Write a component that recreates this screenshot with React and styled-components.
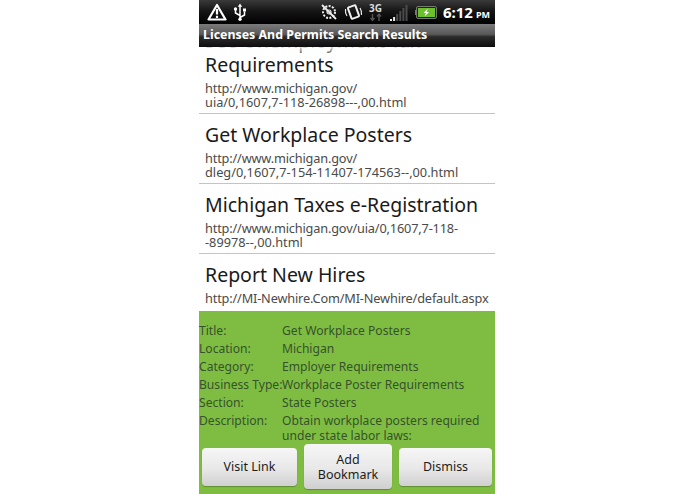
import React from "react";
import styled, { createGlobalStyle } from "styled-components";

const Global = createGlobalStyle`
  html, body {
    margin: 0;
    padding: 0;
    background: #fff;
  }
  * {
    box-sizing: border-box;
  }
`;

const Phone = styled.div`
  width: 296px;
  height: 494px;
  margin-left: 199px;
  display: flex;
  flex-direction: column;
  overflow: hidden;
  background: #fff;
  font-family: "Noto Sans", "Open Sans", sans-serif;
`;
const StatusBar = styled.div`
  height: 24px;
  flex: none;
  display: flex;
  align-items: center;
  padding: 0 5px 0 8px;
  background: linear-gradient(#3a3a3a 0%, #161616 45%, #000 100%);
  color: #fff;
`;
const StatusLeft = styled.div`
  display: flex;
  align-items: center;
  gap: 6px;
  flex: 1;
`;
const StatusRight = styled.div`
  display: flex;
  align-items: center;
  gap: 6px;
`;
const Clock = styled.div`
  font-size: 15px;
  font-weight: 700;
  margin-left: 6px;
  white-space: nowrap;
  span {
    font-size: 9px;
    margin-left: 3px;
  }
`;
const TitleBar = styled.div`
  height: 23px;
  flex: none;
  padding: 2px 0 0 4px;
  background: linear-gradient(#7b7b7b 0%, #585858 45%, #2c2c2c 55%, #0d0d0d 100%);
  color: #fff;
  font-size: 12.4px;
  font-weight: 700;
  line-height: 18px;
  white-space: nowrap;
`;
const List = styled.div`
  position: relative;
  flex: 1;
  min-height: 0;
  overflow: hidden;
  display: flex;
  flex-direction: column;
  justify-content: flex-end;
  &::before {
    content: "";
    position: absolute;
    top: 0;
    left: 0;
    right: 0;
    height: 7px;
    background: linear-gradient(rgba(255, 255, 255, 0.85), rgba(255, 255, 255, 0.25));
  }
`;
const Row = styled.div`
  flex: none;
  padding: 9px 0 ${(props) => (props.last ? "6px" : "4px")} 6px;
  border-bottom: ${(props) => (props.last ? "none" : "1px solid #c4c4c4")};
`;
const RowTitle = styled.div`
  font-size: 19.5px;
  line-height: 24px;
  color: #1a1a1a;
  white-space: pre;
`;
const RowUrl = styled.div`
  font-size: 12.75px;
  line-height: 14px;
  margin-top: 4px;
  color: #4a4a4a;
  white-space: pre;
`;
const UrlLine = styled.div`
  &:first-child {
    letter-spacing: -0.17px;
  }
`;
const Details = styled.div`
  flex: none;
  height: 183px;
  background: #7fbd42;
  padding-top: 11px;
  color: #35532a;
  font-size: 12.1px;
`;
const Info = styled.div`
  display: grid;
  grid-template-columns: 83px 1fr;
  line-height: 18px;
`;
const Label = styled.div`
  white-space: nowrap;
`;
const Value = styled.div`
  white-space: pre-line;
  line-height: ${(props) => (props.multi ? "15px" : "18px")};
  padding-top: ${(props) => (props.multi ? "1px" : "0")};
`;
const Buttons = styled.div`
  display: flex;
  align-items: center;
  gap: 7px;
  padding: 0 3px;
  margin-top: 1px;
`;
const Button = styled.div`
  flex: ${(props) => props.grow};
  height: ${(props) => (props.tall ? "45px" : "38px")};
  display: flex;
  align-items: center;
  justify-content: center;
  text-align: center;
  border-radius: 4px;
  background: linear-gradient(#f6f6f6 0%, #e8e8e8 55%, #cfcfcf 100%);
  box-shadow: 0 1px 1px rgba(0, 0, 0, 0.25);
  color: #1c1c1c;
  font-size: 12.5px;
  line-height: 15px;
`;

const rows = [
  { title: "See Unemployment Tax\nRequirements", url: ["http://www.michigan.gov/", "uia/0,1607,7-118-26898---,00.html"] },
  { title: "Get Workplace Posters", url: ["http://www.michigan.gov/", "dleg/0,1607,7-154-11407-174563--,00.html"] },
  { title: "Michigan Taxes e-Registration", url: ["http://www.michigan.gov/uia/0,1607,7-118-", "-89978--,00.html"] },
  { title: "Report New Hires", url: ["http://MI-Newhire.Com/MI-Newhire/default.aspx"], last: true },
];

const info = [
  ["Title:", "Get Workplace Posters"],
  ["Location:", "Michigan"],
  ["Category:", "Employer Requirements"],
  ["Business Type:", "Workplace Poster Requirements"],
  ["Section:", "State Posters"],
];

function WarningIcon() {
  return (
    <svg width="20" height="18" viewBox="0 0 20 18" fill="none" stroke="#fff">
      <path d="M10 2 L18.5 16.5 H1.5 Z" strokeWidth="2.2" strokeLinejoin="round" />
      <path d="M10 6 V11.5 M10 12.8 V15" strokeWidth="2.2" />
    </svg>
  );
}

function UsbIcon() {
  return (
    <svg width="14" height="18" viewBox="0 0 14 18" fill="none" stroke="#fff" strokeWidth="1.5">
      <path d="M7 3 V17 M7 12.5 L2.5 10 V7 M7 14.5 L11.5 12 V8.5" />
      <path d="M7 0.5 L9.2 3.8 H4.8 Z" fill="#fff" stroke="none" />
      <circle cx="2.5" cy="6" r="1.7" fill="#fff" stroke="none" />
      <rect x="10" y="5.5" width="3" height="3" fill="#fff" stroke="none" />
      <circle cx="7" cy="16.2" r="1.7" fill="#fff" stroke="none" />
    </svg>
  );
}

function NoSyncIcon() {
  return (
    <svg width="18" height="18" viewBox="0 0 18 18" fill="none" stroke="#eee">
      <circle cx="9" cy="9" r="6" strokeWidth="2" strokeDasharray="2 1.4" />
      <circle cx="9" cy="9" r="2" strokeWidth="1.2" />
      <path d="M2 2 L16 16" strokeWidth="1.8" />
    </svg>
  );
}

function RotateIcon() {
  return (
    <svg width="19" height="18" viewBox="0 0 19 18" fill="none" stroke="#eee">
      <rect x="5.5" y="3" width="8" height="12" rx="1" strokeWidth="2" transform="rotate(-20 9.5 9)" />
      <path d="M1.5 6 Q1 10 3 13 M17.5 12 Q18 8 16 5" strokeWidth="1.2" />
    </svg>
  );
}

function NetworkIcon() {
  return (
    <svg width="15" height="21" viewBox="0 0 15 21">
      <text x="0" y="10" fontSize="10" fontWeight="700" fontFamily="Noto Sans, sans-serif" fill="#ddd">3G</text>
      <path d="M3.5 12 V18.5 M1.5 16 L3.5 18.5 L5.5 16 M10 19 V12.5 M8 14.5 L10 12 L12 14.5" stroke="#555" strokeWidth="1.4" fill="none" />
    </svg>
  );
}

function SignalIcon() {
  const bars = [2, 4, 7, 10, 13, 16];
  return (
    <svg width="19" height="17" viewBox="0 0 19 17">
      {bars.map((h, i) => (
        <rect key={i} x={i * 3.1} y={17 - h} width="2" height={h} fill={i < 2 ? "#eee" : "#4c4c4c"} />
      ))}
    </svg>
  );
}

function BatteryIcon() {
  return (
    <svg width="22" height="13" viewBox="0 0 22 13">
      <rect x="0" y="4" width="1.5" height="5" fill="#777" />
      <rect x="1.5" y="0.5" width="20" height="12" rx="1.5" fill="#222" stroke="#777" />
      <rect x="3" y="2" width="17" height="9" fill="#6cc02c" />
      <path d="M13 2.5 L8.5 7 H11 L9.5 10.5 L14 6 H11.5 Z" fill="#fff" />
    </svg>
  );
}

export default function App() {
  return (
    <Phone>
      <Global />
      <StatusBar>
        <StatusLeft>
          <WarningIcon />
          <UsbIcon />
        </StatusLeft>
        <StatusRight>
          <NoSyncIcon />
          <RotateIcon />
          <NetworkIcon />
          <SignalIcon />
          <BatteryIcon />
        </StatusRight>
        <Clock>
          6:12<span>PM</span>
        </Clock>
      </StatusBar>
      <TitleBar>Licenses And Permits Search Results</TitleBar>
      <List>
        {rows.map((row) => (
          <Row key={row.title} last={row.last}>
            <RowTitle>{row.title}</RowTitle>
            <RowUrl>
              {row.url.map((line) => (
                <UrlLine key={line}>{line}</UrlLine>
              ))}
            </RowUrl>
          </Row>
        ))}
      </List>
      <Details>
        <Info>
          {info.map(([label, value]) => (
            <React.Fragment key={label}>
              <Label>{label}</Label>
              <Value>{value}</Value>
            </React.Fragment>
          ))}
          <Label>Description:</Label>
          <Value multi>{"Obtain workplace posters required\nunder state labor laws:"}</Value>
        </Info>
        <Buttons>
          <Button grow="95">Visit Link</Button>
          <Button grow="88" tall>
            Add
            <br />
            Bookmark
          </Button>
          <Button grow="93">Dismiss</Button>
        </Buttons>
      </Details>
    </Phone>
  );
}
